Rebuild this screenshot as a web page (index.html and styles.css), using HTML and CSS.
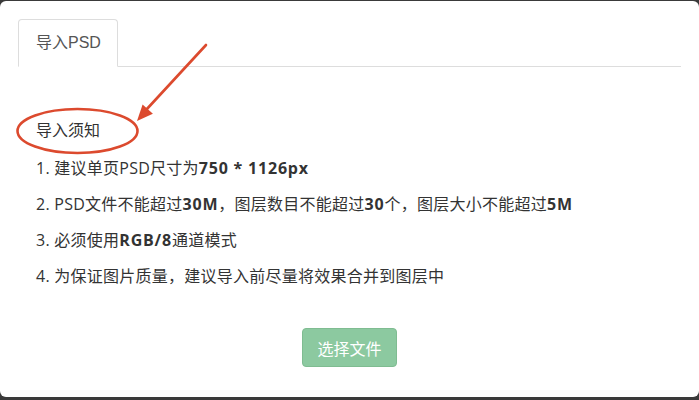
FILE: index.html
```html
<!DOCTYPE html>
<html lang="zh-CN">
<head>
<meta charset="utf-8">
<title>导入PSD</title>
<link rel="stylesheet" href="styles.css">
</head>
<body>
<div class="modal">
  <ul class="tabs">
    <li class="tab active">导入PSD</li>
  </ul>
  <div class="panel">
    <p class="notice-title">导入须知</p>
    <p class="item">1. 建议单页PSD尺寸为<b>750 * 1126px</b></p>
    <p class="item">2. PSD文件不能超过<b>30M</b>，图层数目不能超过<b>30</b>个，图层大小不能超过<b>5M</b></p>
    <p class="item">3. 必须使用<b>RGB/8</b>通道模式</p>
    <p class="item">4. 为保证图片质量，建议导入前尽量将效果合并到图层中</p>
    <div class="actions">
      <button class="btn-choose" type="button">选择文件</button>
    </div>
  </div>
  <svg class="annotation" width="699" height="396" viewBox="0 0 699 396" aria-hidden="true">
    <ellipse cx="77.5" cy="130" rx="60" ry="22" fill="none" stroke="#dc4a2e" stroke-width="2.6"/>
    <line x1="206" y1="44" x2="146" y2="109" stroke="#dc4a2e" stroke-width="2.6" stroke-linecap="round"/>
    <polygon points="137,120 152.9,112.8 142.6,103.4" fill="#dc4a2e"/>
  </svg>
</div>
</body>
</html>
```

FILE: styles.css
```css
html, body {
  margin: 0;
  padding: 0;
}

body {
  background: #3a3a3a;
  width: 699px;
  height: 400px;
  overflow: hidden;
  font-family: "Liberation Sans", "Noto Sans CJK SC", sans-serif;
  color: #333;
}

.modal {
  position: relative;
  margin-top: 1px;
  height: 396px;
  background: #fff;
  border-radius: 6px;
  padding-top: 18px;
  box-sizing: border-box;
}

.tabs {
  list-style: none;
  margin: 0 18px;
  padding: 0;
  display: flex;
  border-bottom: 1px solid #ddd;
}

.tab {
  width: 100px;
  height: 48px;
  box-sizing: border-box;
  border: 1px solid #ddd;
  border-bottom-color: transparent;
  border-radius: 4px 4px 0 0;
  margin-bottom: -1px;
  background: #fff;
  padding-left: 17px;
  font-size: 16px;
  line-height: 46px;
  color: #555;
}

.panel {
  padding: 0 36px;
  font-family: "Open Sans", "Noto Sans CJK SC", sans-serif;
}

.notice-title {
  margin: 44px 0 0;
  height: 39px;
  line-height: 39px;
  font-size: 16px;
}

.item {
  margin: 0;
  height: 36px;
  line-height: 36px;
  font-size: 16px;
  letter-spacing: 0.25px;
}

.item b {
  font-weight: 700;
  letter-spacing: 0.8px;
}

.actions {
  display: flex;
  justify-content: center;
  margin-top: 34px;
}

.btn-choose {
  width: 95px;
  height: 39px;
  background: #8cc9a0;
  border: 1px solid #7fbc91;
  border-radius: 4px;
  color: #fff;
  font-family: "Liberation Sans", "Noto Sans CJK SC", sans-serif;
  font-size: 16px;
  padding: 0;
}

.annotation {
  position: absolute;
  left: 0;
  top: 0;
  pointer-events: none;
}
```
